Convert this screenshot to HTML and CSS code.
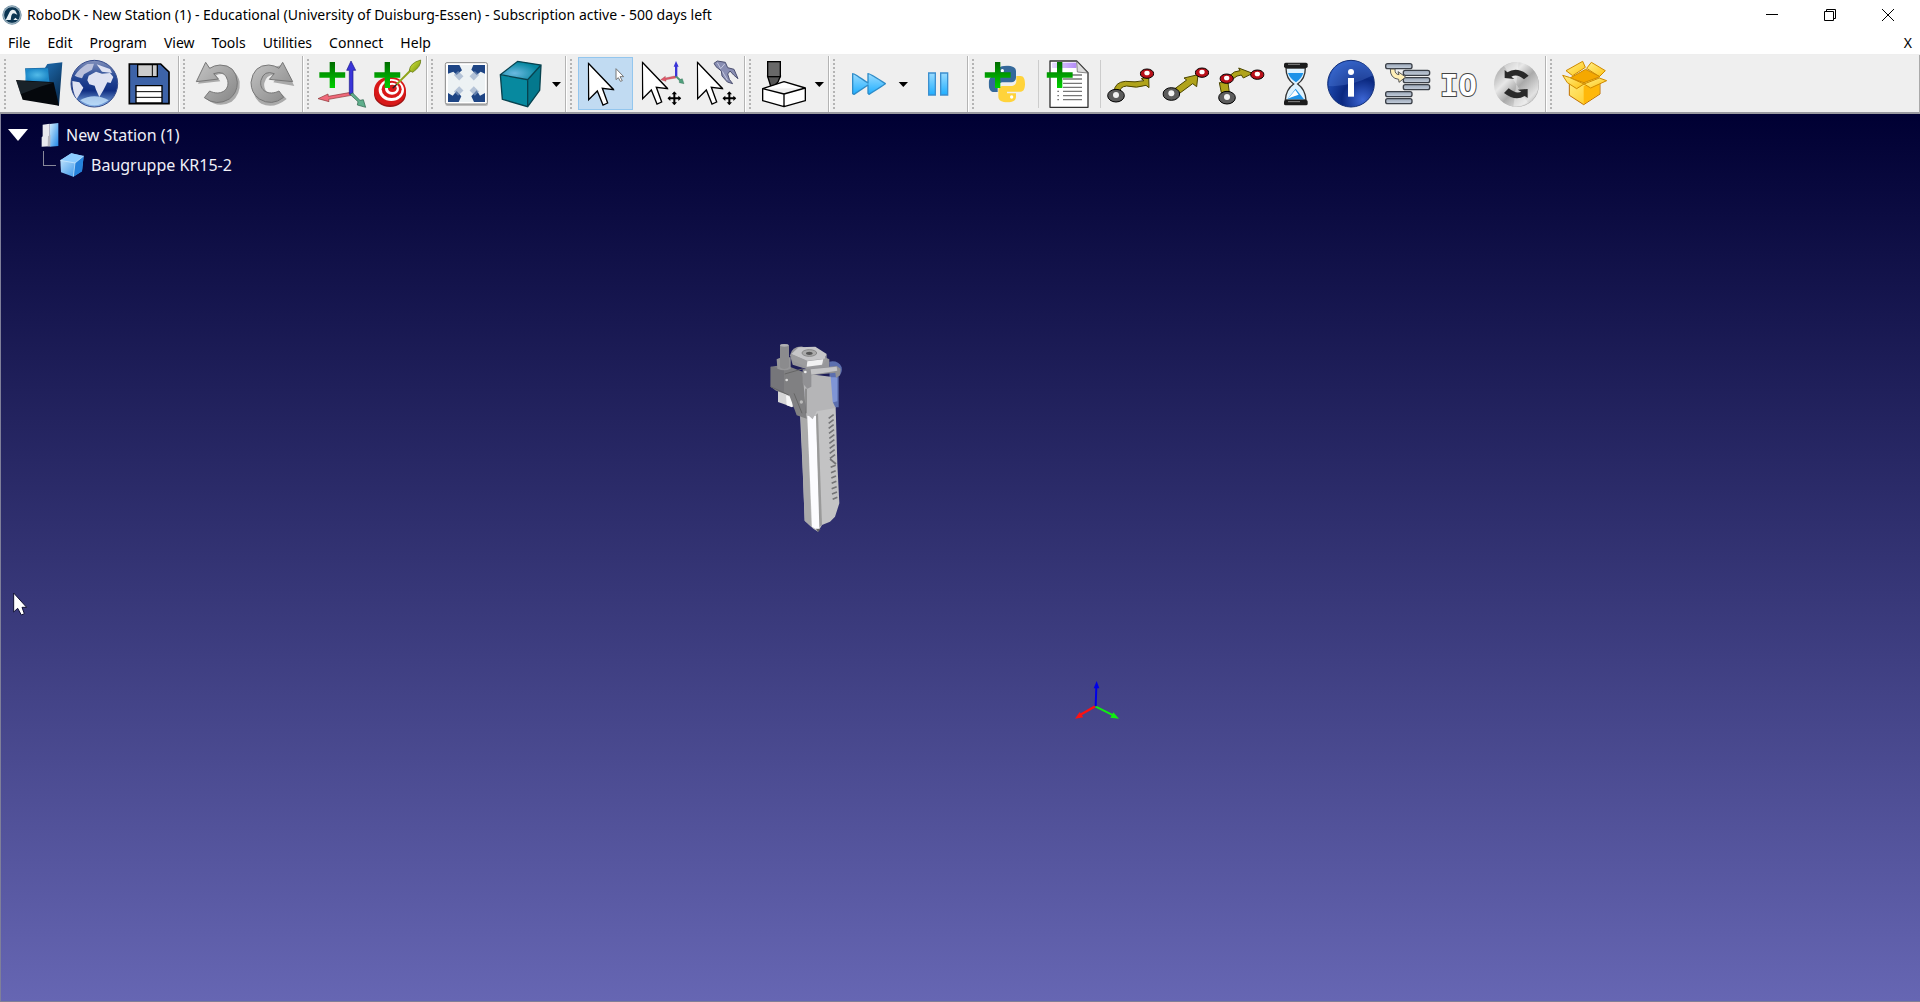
FILE: index.html
```html
<!DOCTYPE html>
<html lang="en">
<head>
<meta charset="utf-8">
<title>RoboDK - New Station (1)</title>
<link rel="stylesheet" href="styles.css">
</head>
<body>
<svg class="defs" width="0" height="0" aria-hidden="true">
  <defs>
    <linearGradient id="green" x1="0" y1="0" x2="0" y2="1"><stop offset="0" stop-color="#006c00"/><stop offset="1" stop-color="#00d000"/></linearGradient>
    <linearGradient id="folderBack" x1="0" y1="0" x2="1" y2="1"><stop offset="0" stop-color="#1b6fa8"/><stop offset=".4" stop-color="#1a5f9c"/><stop offset="1" stop-color="#04203f"/></linearGradient>
    <radialGradient id="folderGlow"><stop offset="0" stop-color="#5ccaf5"/><stop offset="1" stop-color="#1e8fd0"/></radialGradient>
    <linearGradient id="globe" x1="0" y1="0" x2="0" y2="1"><stop offset="0" stop-color="#8290bb"/><stop offset=".35" stop-color="#284a96"/><stop offset=".65" stop-color="#102e82"/><stop offset="1" stop-color="#8fbdf0"/></linearGradient>
    <linearGradient id="grey" x1="0" y1="0" x2="1" y2="1"><stop offset="0" stop-color="#c4c4c4"/><stop offset="1" stop-color="#858585"/></linearGradient>
    <linearGradient id="leaf" x1="0" y1="0" x2="1" y2="1"><stop offset="0" stop-color="#dff04c"/><stop offset="1" stop-color="#6e8a00"/></linearGradient>
    <radialGradient id="teal" cx=".35" cy=".65" r=".6"><stop offset="0" stop-color="#6ab9e0"/><stop offset="1" stop-color="#0687a0"/></radialGradient>
    <linearGradient id="sky" x1="0" y1="0" x2="0" y2="1"><stop offset="0" stop-color="#9bdcff"/><stop offset="1" stop-color="#1eaeff"/></linearGradient>
    <radialGradient id="info" cx=".75" cy=".85" r=".9"><stop offset="0" stop-color="#3c66d4"/><stop offset=".5" stop-color="#0a2880"/><stop offset="1" stop-color="#2454bd"/></radialGradient>
    <linearGradient id="bar" x1="0" y1="0" x2="0" y2="1"><stop offset="0" stop-color="#9ba7b8"/><stop offset="1" stop-color="#c5cfdc"/></linearGradient>
    <linearGradient id="steel" x1="0" y1="0" x2="1" y2="1"><stop offset="0" stop-color="#929292"/><stop offset=".35" stop-color="#e8e8e8"/><stop offset=".55" stop-color="#aaa"/><stop offset=".8" stop-color="#e2e2e2"/><stop offset="1" stop-color="#999"/></linearGradient>
    <linearGradient id="gold" x1="0" y1="0" x2="1" y2="1"><stop offset="0" stop-color="#fff08a"/><stop offset="1" stop-color="#ffc414"/></linearGradient>
    <linearGradient id="ice" x1="0" y1="0" x2="1" y2="1"><stop offset="0" stop-color="#d4efff"/><stop offset="1" stop-color="#1f86e6"/></linearGradient>
    <linearGradient id="lilac" x1="0" y1="0" x2="1" y2="0"><stop offset="0" stop-color="#e7dcff"/><stop offset="1" stop-color="#b48cf8"/></linearGradient>
    <symbol id="plus" viewBox="0 0 80 80"><path d="M32 1H48V32H79V48H48V79H32V48H1V32H32Z" fill="url(#green)"/></symbol>
    <symbol id="pointer" viewBox="0 0 80 132"><path d="M2 3L78 82L44 78L60 122L46 128L29 86L3 112Z" fill="#fff" stroke="#000" stroke-width="4"/></symbol>
    <symbol id="move" viewBox="0 0 42 42"><path d="M21 0L29 9H24V18H33V13L42 21L33 29V24H24V33H29L21 42L13 33H18V24H9V29L0 21L9 13V18H18V9H13Z"/></symbol>
    <symbol id="python" viewBox="0 0 110 112"><path d="M54 1C30 1 29 10 29 17V28H56V32H18C5 32 0 43 0 55C0 70 5 80 16 80H27V67C27 57 35 51 44 51H68C76 51 82 45 82 37V17C82 5 70 1 54 1Z" fill="#35699b"/><path d="M83 32V46C83 56 76 62 67 62H42C34 62 29 68 29 75V94C29 105 41 111 56 111C72 111 82 105 82 94V84H55V79H96C105 79 109 69 109 56C109 41 105 32 96 32Z" fill="#ffd33b"/><circle cx="41" cy="16" r="5" fill="#fff"/><circle cx="69" cy="95" r="5" fill="#fff"/></symbol>
    <symbol id="node" viewBox="0 0 54 44"><ellipse cx="27" cy="22" rx="25" ry="19" fill="#5c5c5c" stroke="#000" stroke-width="3"/><circle cx="27" cy="20" r="9" fill="#f2f2f2"/></symbol>
    <symbol id="goal" viewBox="0 0 44 34"><ellipse cx="22" cy="17" rx="20" ry="14" fill="#b9101a" stroke="#000" stroke-width="3"/><ellipse cx="22" cy="15" rx="8" ry="7" fill="#fff"/></symbol>
  </defs>
</svg>

<header>
  <div class="titlebar">
    <svg class="logo" viewBox="0 0 60 60" aria-hidden="true"><circle cx="30" cy="30" r="29" fill="#6f8fa3"/><circle cx="30" cy="30" r="25" fill="#0b3552" stroke="#d9e4ea" stroke-width="2"/><path d="M11 45L24 19Q30 11 40 17L46 29L36 25Q30 25 28 32L26 45ZM34 45L40 38L48 45Z" fill="#e9f0f4"/></svg>
    <h1>RoboDK - New Station (1) - Educational (University of Duisburg-Essen) - Subscription active - 500 days left</h1>
    <div class="caption">
      <button aria-label="Minimize"><svg viewBox="0 0 12 12"><path d="M0 5.500H12"/></svg></button>
      <button aria-label="Restore"><svg viewBox="0 0 12 12"><path d="M.5 2.500H9.500V11.500H.5ZM2.500 2.500V.5H11.500V9.500H9.500"/></svg></button>
      <button aria-label="Close"><svg viewBox="0 0 12 12"><path d="M0 0L12 12M12 0L0 12"/></svg></button>
    </div>
  </div>
  <nav class="menubar">
    <button>File</button><button>Edit</button><button>Program</button><button>View</button><button>Tools</button><button>Utilities</button><button>Connect</button><button>Help</button>
    <button class="close-doc">X</button>
  </nav>
</header>

<div class="toolbars">
  <div class="group first">
    <button class="tool" aria-label="Open"><svg viewBox="33 6 165 159"><path d="M75 40L135 38L142 27L187 22L177 152L85 120Z" fill="url(#folderBack)"/><path d="M77 42L144 40L148 80L76 78Z" fill="url(#folderGlow)" opacity=".85"/><path d="M48 75L161 82L177 152L68 134Z" fill="#05080c"/><path d="M50 77L160 83L120 95L62 118Z" fill="#26343d" opacity=".6"/></svg></button>
    <button class="tool" aria-label="Open online library"><svg viewBox="198 6 165 159"><circle cx="283" cy="86" r="70" fill="url(#globe)" stroke="#344a8a" stroke-width="3"/><path d="M224 62Q238 40 262 27L282 26L276 44L252 58L246 70L232 66Z" fill="#b9c0dc"/><path d="M217 78L238 82L250 98L240 116L230 132Q217 112 217 78ZM266 62L288 50L306 56L330 54L340 66L332 84L322 82L310 106L298 126L288 104L284 92L268 88L262 76ZM290 28L330 42L336 54L306 50Z" fill="#dfe2f2"/><path d="M240 136Q283 112 326 136Q283 166 240 136Z" fill="#c4e2fb" opacity=".8"/></svg></button>
    <button class="tool" aria-label="Save"><svg viewBox="363 6 165 159"><path d="M388 27H482L507 51V146H388Z" fill="#3d63a8" stroke="#000" stroke-width="5"/><path d="M413 29H472V65H413Z" fill="#ccc" stroke="#000" stroke-width="4"/><path d="M457 29V64" stroke="#000" stroke-width="3"/><path d="M408 92H486V144H408Z" fill="#fff" stroke="#000" stroke-width="4"/><path d="M408 110H486M408 127H486" stroke="#000" stroke-width="3"/></svg></button>
  </div>
  <div class="group">
    <button class="tool" aria-label="Undo"><svg viewBox="573 6 165 159"><path d="M620 29L594 86L661 79L648 61Q680 48 693 80C698 108 668 134 634 114L618 131Q655 162 695 140Q722 118 719 80Q706 28 638 46Z" fill="#aaa"/><path d="M617 22L589 80L655 72L641 56Q675 44 683 76C690 106 660 124 629 108L613 128Q650 155 688 132Q712 114 712 82Q708 30 660 30Q642 31 629 40Z" fill="url(#grey)" stroke="#777" stroke-width="3"/></svg></button>
    <button class="tool" aria-label="Redo"><svg viewBox="738 6 165 159"><path d="M851 29L883 93L820 82L834 62Q800 54 793 84C788 114 820 126 846 118L860 132Q820 164 784 146Q756 128 760 86Q768 34 820 36Z" fill="#aaa"/><path d="M848 22L878 80L808 73L823 56Q792 44 783 76C776 106 806 124 837 108L851 127Q816 155 778 132Q753 114 753 82Q760 30 806 30Q824 31 837 40Z" fill="url(#grey)" stroke="#777" stroke-width="3"/></svg></button>
  </div>
  <div class="group">
    <button class="tool" aria-label="Add reference frame"><svg viewBox="15 6 165 159"><path d="M122 112L55 124L54 117L24 131L57 140L56 133L124 121Z" fill="#f0697a" stroke="#833" stroke-width="2"/><path d="M118 118V46H110L123 18L137 46H129V118Z" fill="#3a35d8" stroke="#1c1a88" stroke-width="2"/><path d="M120 118L144 140L142 150L167 157L160 134L150 136L128 114Z" fill="#5fae8c" stroke="#255e44" stroke-width="2"/><use href="#plus" x="27" y="20" width="80" height="80"/></svg></button>
    <button class="tool" aria-label="Add target"><svg viewBox="180 6 165 159"><ellipse cx="240" cy="116" rx="48" ry="40" fill="#9d1414"/><ellipse cx="240" cy="108" rx="48" ry="43" fill="#d81818"/><ellipse cx="244" cy="105" rx="38" ry="33" fill="#fff"/><ellipse cx="245" cy="103" rx="30" ry="26" fill="#d81818"/><ellipse cx="246" cy="101" rx="21" ry="18" fill="#fff"/><ellipse cx="247" cy="100" rx="13" ry="11" fill="#d81818"/><path d="M248 100L262 86" stroke="#222" stroke-width="4"/><path d="M260 88L306 42" stroke="#8fa31a" stroke-width="6"/><path d="M298 46Q300 24 332 15Q334 34 308 52Z" fill="url(#leaf)" stroke="#556b00" stroke-width="2"/><use href="#plus" x="192" y="20" width="80" height="80"/></svg></button>
  </div>
  <div class="group">
    <button class="tool" aria-label="Fit all"><svg viewBox="387 6 165 159"><rect x="406" y="25" width="128" height="128" rx="6" fill="#bbb"/><rect x="406" y="23" width="126" height="124" rx="5" fill="#fff" stroke="#888" stroke-width="3"/><rect x="414" y="30" width="111" height="111" fill="#1e4585"/><path d="M448 30H490L484 44L500 60L512 50L525 56V114L510 122L500 106L484 124L492 141H446L454 124L440 108L428 122L414 114V56L430 50L440 60L456 46Z" fill="#edf2f4"/><path d="M438 54L454 70M501 54L485 70M438 116L454 100M501 116L485 100" stroke="#8fa4c4" stroke-width="18" opacity=".6"/></svg></button>
    <button class="tool drop" aria-label="Views"><svg viewBox="552 6 210 159"><path d="M571 59L623 19L693 30L653 74Z" fill="url(#teal)"/><path d="M571 59L653 74V155L577 133Z" fill="#07899f"/><path d="M653 74L693 30L689 106L653 155Z" fill="#04788d"/><path d="M571 59L623 19L693 30L689 106L653 155L577 133ZM571 59L653 74L693 30M653 74V155" fill="none" stroke="#07424f" stroke-width="4"/><path d="M726 81H753L739 96Z"/></svg></button>
  </div>
  <div class="group">
    <button class="tool active" aria-label="Select"><svg viewBox="444 171 165 159"><use href="#pointer" x="473" y="187" width="80" height="132"/><path d="M558 206L581 230H570L577 242L571 244L565 233L558 239Z" fill="#fff" stroke="#777" stroke-width="3"/></svg></button>
    <button class="tool" aria-label="Move reference frame"><svg viewBox="609 171 165 159"><path d="M734 228L706 234V229L692 239L708 244V239L738 234Z" fill="#e0576a" stroke="#944" stroke-width="1"/><path d="M735 230V200H731L738 183L746 200H742V230Z" fill="#3a35d8"/><path d="M736 230L748 242V248L762 251L757 236L751 238L741 229Z" fill="#4f9f7c" stroke="#255e44"/><use href="#pointer" x="635" y="184" width="80" height="132"/><use href="#move" x="712" y="274" width="42" height="42"/></svg></button>
    <button class="tool" aria-label="Move tool"><svg viewBox="774 171 165 159"><path d="M852 190L862 183L886 187L893 203L912 208L924 236L911 225L900 213L893 222L898 238L908 251L892 246L876 228L874 213L858 200Z" fill="#898eb3" stroke="#4c5070" stroke-width="3"/><path d="M862 188L872 206L884 192M877 214L892 240" fill="none" stroke="#c5c9df" stroke-width="3"/><use href="#pointer" x="800" y="184" width="80" height="132"/><use href="#move" x="877" y="274" width="42" height="42"/></svg></button>
  </div>
  <div class="group">
    <button class="tool drop" aria-label="Robot machining"><svg viewBox="51 21 210 159"><path d="M83 79H121L114 96L103 108H92Z" fill="#555" stroke="#000" stroke-width="4"/><rect x="83" y="35" width="38" height="45" fill="#686868" stroke="#000" stroke-width="4"/><path d="M68 116L132 95L196 114V152L132 170L68 152ZM68 116L132 132L196 114M132 132V170" fill="#fff" stroke="#000" stroke-width="4" stroke-linejoin="round"/><path d="M224 96H252L238 111Z"/></svg></button>
  </div>
  <div class="group">
    <button class="tool drop" aria-label="Fast simulation"><svg viewBox="303 21 210 159"><path d="M338 71Q340 69 384 99V71Q388 69 436 101Q434 104 387 133L384 130V105L342 133L338 131Z" fill="url(#sky)" stroke="#2f8cc8" stroke-width="4" stroke-linejoin="round"/><path d="M476 96H504L490 111Z"/></svg></button>
    <button class="tool" aria-label="Pause"><svg viewBox="513 21 165 159"><path d="M566 69H586V135H566ZM602 69H623V135H602Z" fill="url(#sky)" stroke="#3c8fce" stroke-width="4"/></svg></button>
  </div>
  <div class="group">
    <button class="tool" aria-label="Add Python program"><svg viewBox="30 21 165 159"><use href="#python" x="56" y="46" width="110" height="112"/><use href="#plus" x="43" y="35" width="80" height="80"/></svg></button>
    <span class="divider"></span>
    <button class="tool" aria-label="Add program"><svg viewBox="216 21 165 159"><path d="M240 33H320L354 68V172H240Z" fill="#fff" stroke="#333" stroke-width="4" stroke-linejoin="round"/><rect x="246" y="38" width="73" height="16" fill="url(#lilac)"/><path d="M320 34L322 66L353 69Z" fill="#ddd" stroke="#555" stroke-width="2"/><path d="M279 75H336M279 87H336M279 100H336M279 112H336M279 124H336M279 137H336M279 149H336M262 124H267M262 137H267M262 149H267" stroke="#777" stroke-width="4"/><use href="#plus" x="229" y="35" width="80" height="80"/></svg></button>
    <span class="divider"></span>
    <button class="tool" aria-label="Move joint"><svg viewBox="402 21 165 159"><path d="M432 126Q434 96 466 94Q496 98 522 92L514 86L536 80L537 113L528 106Q500 116 470 108Q446 110 450 132Z" fill="#b0a31a" stroke="#4b4500" stroke-width="3"/><use href="#node" x="411" y="115" width="54" height="44"/><use href="#goal" x="509" y="54" width="44" height="34"/></svg></button>
    <button class="tool" aria-label="Move linear"><svg viewBox="567 21 165 159"><path d="M612 118L650 90L642 84L684 74L680 110L668 101L626 132Z" fill="#b0a31a" stroke="#4b4500" stroke-width="3"/><use href="#node" x="577" y="110" width="54" height="44"/><use href="#goal" x="674" y="51" width="44" height="34"/></svg></button>
    <button class="tool" aria-label="Move circular"><svg viewBox="732 21 165 159"><path d="M748 98H774L778 128H754ZM778 78Q792 62 810 62L806 54L848 70L820 84L814 75Q800 76 790 86Z" fill="#b0a31a" stroke="#4b4500" stroke-width="3"/><use href="#node" x="744" y="121" width="54" height="44"/><use href="#goal" x="748" y="69" width="44" height="34"/><use href="#goal" x="840" y="57" width="44" height="34"/></svg></button>
    <button class="tool" aria-label="Pause instruction"><svg viewBox="-33 21 165 159"><path d="M18 54H76Q76 86 53 102Q76 118 78 150H16Q18 118 41 102Q18 86 18 54Z" fill="#dff3ff" stroke="#333" stroke-width="4"/><path d="M24 69H70Q64 86 48 97Q30 86 24 69Z" fill="#1e93e8"/><path d="M47 116L72 148H22Z" fill="#1e93e8"/><path d="M46 120L56 134L34 142L24 146Z" fill="#fff"/><rect x="12" y="38" width="71" height="16" rx="5" fill="#1c1c1c"/><rect x="12" y="150" width="71" height="16" rx="5" fill="#1c1c1c"/><path d="M24 43H60M24 155H60" stroke="#888" stroke-width="3"/></svg></button>
    <button class="tool" aria-label="Show message"><svg viewBox="132 21 165 159"><circle cx="213" cy="101" r="70" fill="url(#info)" stroke="#122f78" stroke-width="3"/><path d="M146 108Q210 112 279 76Q266 34 213 33Q150 36 146 108Z" fill="#5d88e0" opacity=".3"/><circle cx="213" cy="66" r="9" fill="#fff"/><rect x="204" y="84" width="18" height="56" fill="#fff"/></svg></button>
    <button class="tool" aria-label="Program call"><svg viewBox="297 21 165 159"><g fill="url(#bar)" stroke="#3b4048" stroke-width="4"><rect x="317" y="41" width="79" height="15" rx="6"/><rect x="370" y="61" width="79" height="15" rx="6"/><rect x="370" y="83" width="79" height="15" rx="6"/><rect x="370" y="104" width="79" height="15" rx="6"/><rect x="317" y="125" width="79" height="15" rx="6"/><rect x="317" y="146" width="79" height="15" rx="6"/></g><path d="M331 57H345Q344 73 357 74L354 65L377 81L357 97L356 88Q330 85 331 57Z" fill="#ffefb8" stroke="#555" stroke-width="3"/></svg></button>
    <button class="tool" aria-label="Set or wait I/O"><svg viewBox="462 21 165 159"><text class="io" x="480" y="137">IO</text></svg></button>
    <button class="tool" aria-label="Simulation event"><svg viewBox="627 21 165 159"><circle cx="711" cy="105" r="66" fill="#aaa"/><circle cx="709" cy="103" r="67" fill="url(#steel)"/><path d="M709 103L672 48Q692 36 716 36ZM709 103L744 158Q724 170 700 170Z" fill="#fff" opacity=".35"/><path d="M674 84V60L682 67Q712 48 746 77L732 88Q712 70 694 80L703 87ZM743 117V144L734 138Q706 155 672 129L686 115Q708 133 724 125L713 119Z" fill="#292929"/></svg></button>
  </div>
  <div class="group last">
    <button class="tool" aria-label="Packages"><svg viewBox="834 21 165 159"><path d="M868 92L911 76L960 90V132L911 164L868 136Z" fill="url(#gold)" stroke="#c07000" stroke-width="3"/><path d="M911 108V162L958 131V94Z" fill="#ffb80a"/><g fill="url(#gold)" stroke="#cf8a00" stroke-width="3" stroke-linejoin="round"><path d="M858 62L908 34L916 52L878 77Z"/><path d="M920 55L934 37L976 62L958 80Z"/><path d="M870 84L917 58L960 80L912 98Z" fill="#f5a800"/><path d="M848 76L868 82L912 102L890 116L862 98Z"/><path d="M912 102L958 84L980 92L932 114Z"/></g></svg></button>
  </div>
</div>

<main class="station">
  <ul class="tree">
    <li>
      <div class="item">
        <button class="expander" aria-label="Collapse"></button>
        <svg class="station-icon" viewBox="0 0 54 72"><path d="M26 3L52 0V69L26 71Z" fill="url(#ice)"/><path d="M5 5L26 2V70L2 71V43L5 40Z" fill="#e9e9ee"/><path d="M21 40L28 36V70H20Z" fill="#b4b4bd"/></svg>
        <span>New Station (1)</span>
      </div>
      <ul>
        <li>
          <div class="item child">
            <span class="branch"></span>
            <svg class="cube-icon" viewBox="0 0 72 72"><path d="M1 22L34 1L71 9L66 55L40 71L3 58Z" fill="url(#ice)"/><path d="M1 22L34 1L71 9L45 30Z" fill="#8cccff"/><path d="M45 30L71 9L66 55L40 71Z" fill="#2582dc"/><path d="M1 22L45 30L40 71M45 30L71 9" fill="none" stroke="#d8f0ff" stroke-width="2"/></svg>
            <span>Baugruppe KR15-2</span>
          </div>
        </li>
      </ul>
    </li>
  </ul>

  <svg class="model" viewBox="0 0 330 630" aria-label="Baugruppe KR15-2">
    <path d="M238 95Q265 90 275 112Q278 130 266 138V232H240Z" fill="#5c6fae"/>
    <path d="M240 142H262V214L240 220Z" fill="#7f95d6"/>
    <path d="M203 235L257 232L262 400L268 520L255 560L240 575L216 585L204 605L190 596L164 572L158 420L150 250L172 240Z" fill="#c3c3c4"/>
    <path d="M152 252L172 262L184 590L164 572Z" fill="#aaa"/>
    <path d="M172 258L198 258L210 588L204 600L186 590Z" fill="#fcfcff"/>
    <path d="M198 254L204 250L216 584L208 592Z" fill="#9a9a9a"/>
    <path d="M198 596L204 606L212 597Z" fill="#666"/>
    <path d="M236 265L251 254M236 280L251 269M236 295L251 284M237 310L252 299M238 325L253 314M238 340L253 329M239 355L254 344M239 370L254 359M240 385L255 374M240 387L258 402M242 412L257 406M243 428L257 422M244 444L258 438M245 460L259 454M245 476L260 470M246 492L261 486M248 508L262 502" stroke="#747476" stroke-width="5"/>
    <path d="M84 180L130 182V232L118 228L84 216Z" fill="#d5d5d6"/><path d="M108 196L126 202V232L110 226Z" fill="#f7f7f7"/>
    <path d="M62 110L104 104L160 126L168 240L170 266L140 256L132 234L118 196L78 182L62 170Z" fill="#808082"/>
    <path d="M62 110L102 116V188L62 170Z" fill="#76767a"/>
    <path d="M158 130L242 140L248 215L257 234L200 244L188 268L168 250Z" fill="#b5b5b7"/>
    <path d="M168 176V250M132 190L156 250M104 132L160 116M62 170L118 196" stroke="#666" stroke-width="3"/>
    <path d="M120 76Q126 48 158 50L238 88V112L190 124L128 104Z" fill="#97979a"/>
    <path d="M158 118L182 116L260 108L272 116L270 136L258 144L256 128L184 136V170L172 176L158 160Z" fill="#919194"/>
    <path d="M182 118L260 110L262 122L184 134Z" fill="#c4c4c6"/>
    <path d="M124 72L146 52L196 50L230 72L224 88L172 94Z" fill="#c6c6c8"/>
    <path d="M124 72L172 92L168 110L128 92ZM172 92L224 86L230 72V90L216 108L168 112Z" fill="#9c9c9e"/>
    <path d="M172 94L220 88L216 104L170 110Z" fill="#f1f1f2"/>
    <ellipse cx="178" cy="69" rx="22" ry="10" fill="#aaa" stroke="#888" stroke-width="3"/><ellipse cx="178" cy="70" rx="10" ry="5" fill="#555"/>
    <path d="M80 88Q90 80 122 82V116Q104 126 82 116Z" fill="#969698"/><path d="M90 46Q102 40 117 46V112Q102 122 90 112Z" fill="#8b8b8d"/><ellipse cx="103" cy="46" rx="13" ry="4" fill="#b1b1b3"/>
    <circle cx="110" cy="150" r="4" fill="#ddd"/><circle cx="154" cy="216" r="5" fill="#bbb"/><circle cx="166" cy="126" r="4" fill="#eee"/>
  </svg>

  <svg class="origin" viewBox="0 0 240 180" aria-label="World frame"><path d="M106 109L60 135" stroke="#f11" stroke-width="7"/><path d="M45 146L59 126L70 142Z" fill="#f11"/><path d="M106 109L160 136" stroke="#1e1" stroke-width="6"/><path d="M177 146L151 143L160 127Z" fill="#1e1"/><path d="M107 109L109 50" stroke="#0000e8" stroke-width="6"/><path d="M101 55L110 33L118 55Z" fill="#0000e8"/></svg>

  <svg class="cursor" viewBox="0 0 42 72" aria-hidden="true"><path d="M2 3V60L14 49L25 69L34 65L27 46H41Z" fill="#fff" stroke="#111133" stroke-width="3"/></svg>
</main>
</body>
</html>
```
FILE: styles.css
```css
* { box-sizing: border-box; }

html, body { height: 100%; }

body {
  margin: 0;
  display: flex;
  flex-direction: column;
  overflow: hidden;
  background: #fff;
  color: #000;
  font-family: "Noto Sans", "Open Sans", sans-serif;
  font-size: 14px;
}

button {
  margin: 0;
  padding: 0;
  border: 0;
  background: none;
  color: inherit;
  font: inherit;
}

svg { display: block; }
.defs { position: absolute; }

/* Window title */
.titlebar {
  display: flex;
  align-items: center;
  height: 29px;
  padding-left: 2px;
}
.logo { width: 20px; height: 20px; margin-right: 5px; }
h1 { margin: 0; font-size: 14px; font-weight: 400; white-space: nowrap; }
.caption { display: flex; margin-left: auto; padding-right: 3px; }
.caption button {
  display: grid;
  place-items: center;
  width: 58px;
  height: 28px;
}
.caption svg { width: 12px; height: 12px; fill: none; stroke: #000; }

/* Menus */
.menubar {
  display: flex;
  align-items: center;
  gap: 17px;
  height: 26px;
  padding: 2px 8px 0;
  border-bottom: 1px solid #eee;
}
.close-doc { margin-left: auto; }

/* Toolbars */
.toolbars {
  display: flex;
  height: 59px;
  padding-top: 1px;
  border-right: 1px solid #aaa;
  border-bottom: 2px solid #9a9aa0;
  background: #efefef;
}
.group {
  display: flex;
  position: relative;
  padding: 1px 1px 0 12px;
  border-right: 1px solid #b4b4b4;
  box-shadow: 1px 0 #fff;
}
.group.first { padding: 1px 2px 0 11px; }
.group::before {
  content: "";
  position: absolute;
  left: 4px;
  top: 3px;
  bottom: 3px;
  width: 2px;
  background: repeating-linear-gradient(#b4b4b4 0 2px, transparent 2px 4px);
}
.group.last { border-right: 0; box-shadow: none; }
.tool { width: 55px; height: 53px; }
.tool svg { width: 100%; height: 100%; }
.tool.drop { width: 70px; }
.tool.active { background: #c1dbf2; box-shadow: inset 0 0 0 1px #93c6ee; }
.divider {
  width: 1px;
  height: 48px;
  margin: 3px;
  background: #ccc;
}
.io {
  fill: #fff;
  stroke: #444;
  stroke-width: 6px;
  paint-order: stroke;
  font: 700 92px "DejaVu Sans Mono", monospace;
}

/* 3D station view */
.station {
  position: relative;
  flex: 1;
  border: solid #7f7f99;
  border-width: 0 0 1px 1px;
  background: linear-gradient(#000033, #6666b3);
}
.tree, .tree ul { margin: 0; padding: 0; list-style: none; }
.tree { padding: 6px 7px; color: #f0f0f8; font-size: 16px; }
.item { display: flex; align-items: center; height: 30px; }
.expander {
  width: 20px;
  height: 12px;
  margin-right: 13px;
  background: #fff;
  clip-path: polygon(0 0, 100% 0, 50% 100%);
}
.station-icon { width: 18px; height: 24px; margin-right: 7px; }
.child { padding-left: 35px; }
.branch {
  width: 13px;
  height: 15px;
  margin: 0 4px 13px 0;
  border: solid #888899;
  border-width: 0 0 1px 1px;
}
.cube-icon { width: 24px; height: 24px; margin-right: 7px; }

.model { position: absolute; left: 749px; top: 216px; width: 110px; height: 210px; }
.origin { position: absolute; left: 1059px; top: 556px; width: 80px; height: 60px; }
.cursor { position: absolute; left: 12px; top: 478px; width: 14px; height: 24px; }
```
